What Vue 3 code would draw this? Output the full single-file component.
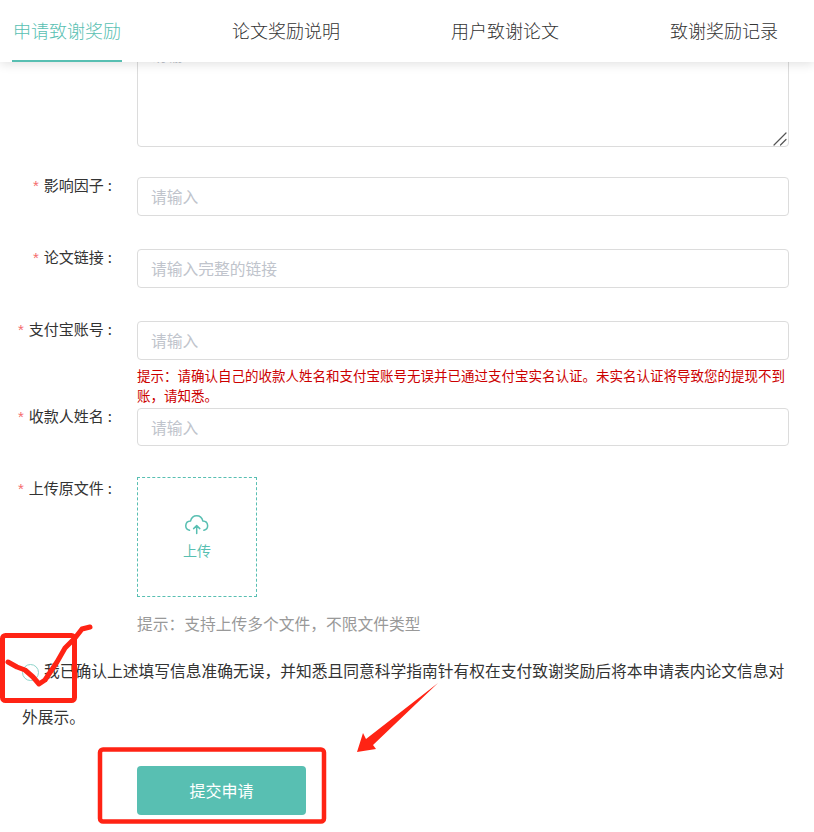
<script setup>
const tabs = ['申请致谢奖励', '论文奖励说明', '用户致谢论文', '致谢奖励记录']
</script>

<template>
  <div class="page">
    <header class="tabs">
      <div v-for="(t, i) in tabs" :key="t" class="tab" :class="{ active: i === 0 }">{{ t }}</div>
    </header>

    <form class="form" @submit.prevent>
      <div class="row row-area">
        <div class="label"></div>
        <div class="area-wrap">
          <textarea class="area" placeholder="请输入"></textarea>
          <svg class="grip" width="14" height="14" viewBox="0 0 14 14" stroke="#555" stroke-width="1.2" stroke-linecap="round">
            <path d="M1 13 13 1M7.5 13 13 7.5" />
          </svg>
        </div>
      </div>
      <div class="row">
        <label class="label"><i>*</i>影响因子<b>:</b></label>
        <input class="input" placeholder="请输入" />
      </div>
      <div class="row">
        <label class="label"><i>*</i>论文链接<b>:</b></label>
        <input class="input" placeholder="请输入完整的链接" />
      </div>
      <div class="row row-tight">
        <label class="label"><i>*</i>支付宝账号<b>:</b></label>
        <div class="field">
          <input class="input" placeholder="请输入" />
          <p class="warn">提示&#xFF1A;请确认自己的收款人姓名和支付宝账号无误并已通过支付宝实名认证。未实名认证将导致您的提现不到账&#xFF0C;请知悉。</p>
        </div>
      </div>
      <div class="row row-name">
        <label class="label"><i>*</i>收款人姓名<b>:</b></label>
        <input class="input input-sm" placeholder="请输入" />
      </div>
      <div class="row row-upload">
        <label class="label label-upload"><i>*</i>上传原文件<b>:</b></label>
        <div class="field">
          <div class="upload">
            <svg class="cloud" width="24" height="20" viewBox="0 0 24 20" fill="none" stroke="#58bfb2" stroke-width="1.5" stroke-linecap="round" stroke-linejoin="round">
              <path d="M4.5 15.2C2 14.6 .6 12.6 .8 10.4 1 8 3 6.2 5.5 6.1 6.3 2.9 8.9 .8 11.7 .8s5.4 2.1 6.2 5.3c2.5.1 4.5 1.9 4.7 4.3.2 2.2-1.2 4.2-3.7 4.8" />
              <path d="M11.7 18.5V10.8M8.6 13.6l3.1-3 3.1 3" />
            </svg>
            <span>上传</span>
          </div>
          <p class="tip">提示&#xFF1A;支持上传多个文件&#xFF0C;不限文件类型</p>
        </div>
      </div>
      <div class="agree"><span class="radio"></span>我已确认上述填写信息准确无误&#xFF0C;并知悉且同意科学指南针有权在支付致谢奖励后将本申请表内论文信息对外展示。</div>
      <div class="actions">
        <button class="submit" type="submit">提交申请</button>
      </div>
    </form>

    <svg class="marks" width="814" height="832" viewBox="0 0 814 832" fill="none" stroke="#ff2314" stroke-linejoin="round" stroke-linecap="round">
      <rect x="2.5" y="635.5" width="72" height="65" rx="3" stroke-width="5" />
      <rect x="100" y="749.5" width="224" height="72" rx="3" stroke-width="4.5" />
      <path d="M8 662 17 667 25 670 33 677 39 684 45 680 57 662 65 648 75 638 82 629 90 627" stroke-width="5" />
      <polygon points="438,683 373,745 376,749 357,752 363,733 366,739" fill="#ff2314" stroke="none" />
    </svg>
  </div>
</template>

<style>
html, body { margin: 0; overflow: hidden; background: #fff; }
</style>

<style scoped>
.page {
  position: relative;
  width: 814px;
  height: 832px;
  overflow: hidden;
  font-family: "Noto Sans CJK SC", "Liberation Sans", sans-serif;
  color: #333;
}
.tabs {
  position: absolute;
  top: 0;
  left: 0;
  right: 0;
  z-index: 2;
  height: 62px;
  display: flex;
  gap: 109px;
  padding-left: 12px;
  background: #fff;
  box-shadow: 0 2px 10px rgba(0, 0, 0, .12);
}
.tab {
  width: 110px;
  height: 60px;
  line-height: 60px;
  font-size: 18px;
  text-align: center;
  white-space: nowrap;
  color: #333;
  font-weight: 300;
}
.tab.active {
  color: #58bfb2;
  border-bottom: 2px solid #58bfb2;
}
.form {
  padding: 36px 25px 17px 0;
}
.row {
  display: flex;
  margin-bottom: 33px;
}
.row-area { margin-bottom: 30px; }
.row-tight { margin-bottom: 3px; }
.row-name { margin-bottom: 31px; }
.row-upload { margin-bottom: 0; }
.label {
  flex: none;
  width: 112px;
  margin-right: 25px;
  text-align: right;
  font-size: 15px;
  line-height: 16px;
  white-space: nowrap;
}
.label-upload { margin-top: 3px; margin-bottom: -3px; }
.label i {
  font-family: "Liberation Sans", sans-serif;
  font-style: normal;
  color: #f56c6c;
  margin-right: 5px;
}
.label b {
  font-weight: 400;
  margin-left: 4px;
}
.field { flex: 1; min-width: 0; }
.area-wrap {
  position: relative;
  flex: none;
}
.grip {
  position: absolute;
  right: 2px;
  bottom: 1px;
  pointer-events: none;
}
.input, .area {
  display: block;
  box-sizing: border-box;
  width: 652px;
  margin: 0;
  font-family: inherit;
  font-size: 15.75px;
  color: #333;
  background: #fff;
  border: 1px solid #dcdcdc;
  border-radius: 4px;
  outline: none;
}
.input {
  height: 39px;
  padding: 0 13px 1px;
}
.input-sm { height: 38px; padding-bottom: 0; }
.area {
  height: 111px;
  padding: 6px 13px;
  line-height: 24px;
  resize: none;
}
.input::placeholder, .area::placeholder { color: #c0c4cc; }
.warn {
  margin: 5px 0 0;
  width: 652px;
  font-size: 13.5px;
  line-height: 20px;
  color: #cc0000;
}
.upload {
  box-sizing: border-box;
  width: 120px;
  height: 120px;
  padding-top: 1px;
  border: 1px dashed #58bfb2;
  display: flex;
  flex-direction: column;
  align-items: center;
  justify-content: center;
  gap: 5px;
  font-size: 14px;
  line-height: 20px;
  color: #58bfb2;
}
.cloud { display: block; }
.tip {
  margin: 16px 0 0;
  font-size: 15.75px;
  line-height: 22px;
  color: #999;
}
.agree {
  margin-top: 13px;
  padding-left: 22px;
  width: 770px;
  font-size: 15.75px;
  line-height: 46px;
  color: #333;
}
.radio {
  display: inline-block;
  box-sizing: border-box;
  width: 17px;
  height: 17px;
  margin-right: 5px;
  border: 1px solid #8ed4ca;
  border-radius: 50%;
  vertical-align: middle;
}
.actions {
  margin-top: 26px;
  padding-left: 137px;
}
.submit {
  display: block;
  width: 169px;
  height: 49px;
  padding: 0 0 2px;
  border: none;
  border-radius: 4px;
  background: #58bfb2;
  color: #fff;
  font-family: inherit;
  font-size: 16px;
}
.marks {
  position: absolute;
  top: 0;
  left: 0;
  z-index: 3;
  pointer-events: none;
}
</style>
